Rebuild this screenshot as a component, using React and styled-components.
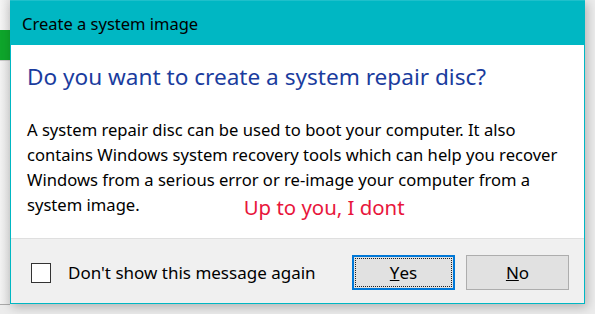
import styled, { createGlobalStyle } from "styled-components";

const GlobalStyle = createGlobalStyle`
  html, body {
    margin: 0;
    padding: 0;
    background: #ececec;
    overflow: hidden;
  }
  body {
    font-family: "Noto Sans", "Open Sans", sans-serif;
  }
`;

const App = () => {
  return (
    <>
      <GlobalStyle />
      <Desktop>
        <BackWindow>
          <BackTop />
          <BackGreen />
          <BackBody />
        </BackWindow>
        <Dialog>
          <TitleBar>Create a system image</TitleBar>
          <Content>
            <Heading>Do you want to create a system repair disc?</Heading>
            <Body>
              <Line>A system repair disc can be used to boot your computer. It also</Line>
              <Line>contains Windows system recovery tools which can help you recover</Line>
              <Line>Windows from a serious error or re-image your computer from a</Line>
              <Line>
                system image.
                <Note>Up to you, I dont</Note>
              </Line>
            </Body>
          </Content>
          <Footer>
            <CheckLabel>
              <CheckBox />
              Don't show this message again
            </CheckLabel>
            <Buttons>
              <Button $focused>
                <Focus>
                  <u>Y</u>es
                </Focus>
              </Button>
              <Button>
                <u>N</u>o
              </Button>
            </Buttons>
          </Footer>
        </Dialog>
      </Desktop>
    </>
  );
};

export default App;

const Desktop = styled.div`
  display: flex;
  width: 595px;
  height: 314px;
  background: #ececec;
`;

const BackWindow = styled.div`
  width: 10px;
  height: 304px;
  display: flex;
  flex-direction: column;
  border-bottom: 1px solid #a8a8a8;
  background: #f0f0f0;
`;

const BackTop = styled.div`
  height: 30px;
  background: linear-gradient(to right, #f4f4f4, #e4e4e4);
`;

const BackGreen = styled.div`
  height: 30px;
  background: #0ea52b;
  border-bottom: 1px solid #c8c8c8;
`;

const BackBody = styled.div`
  flex: 1;
  background: linear-gradient(to right, #f2f2f2, #e2e2e2);
`;

const Dialog = styled.div`
  width: 573px;
  height: 303px;
  display: flex;
  flex-direction: column;
  background: #ffffff;
  border: 1px solid #00b7c3;
  border-top: none;
  box-shadow: 2px 3px 10px rgba(0, 0, 0, 0.25);
`;

const TitleBar = styled.div`
  height: 45px;
  flex-shrink: 0;
  background: #00b7c3;
  color: #000;
  font-size: 16.5px;
  line-height: 45px;
  margin: 0 -1px;
  padding-left: 12px;
  border-top: 1px solid #1ec0cb;
  box-sizing: border-box;
`;

const Content = styled.div`
  flex: 1;
  padding: 17px 16px 0 16px;
`;

const Heading = styled.div`
  color: #1a3c9e;
  font-size: 22.6px;
  line-height: 30px;
`;

const Body = styled.div`
  margin-top: 25px;
  color: #000;
  font-size: 16.6px;
  line-height: 25px;
`;

const Line = styled.div`
  white-space: nowrap;
`;

const Note = styled.span`
  color: #e8163c;
  font-size: 20.4px;
  margin-left: 104px;
  vertical-align: -4px;
`;

const Footer = styled.div`
  height: 65px;
  flex-shrink: 0;
  display: flex;
  align-items: center;
  justify-content: space-between;
  background: #f0f0f0;
  border-top: 1px solid #dfdfdf;
  padding: 3px 15px 0 20px;
  box-sizing: border-box;
`;

const CheckLabel = styled.label`
  display: flex;
  align-items: center;
  gap: 17px;
  font-size: 17px;
  color: #000;
`;

const CheckBox = styled.span`
  width: 18px;
  height: 18px;
  border: 1px solid #333;
  background: #fff;
`;

const Buttons = styled.div`
  display: flex;
  gap: 11px;
`;

const Button = styled.div`
  width: 103px;
  height: 35px;
  box-sizing: border-box;
  display: flex;
  align-items: center;
  justify-content: center;
  background: #e1e1e1;
  border: ${(p) => (p.$focused ? "2px solid #0078d7" : "1px solid #adadad")};
  font-size: 17px;
  color: #000;
  padding: ${(p) => (p.$focused ? "1px" : "0")};
`;

const Focus = styled.div`
  flex: 1;
  align-self: stretch;
  display: flex;
  align-items: center;
  justify-content: center;
  border: 1px dotted #222;
`;
